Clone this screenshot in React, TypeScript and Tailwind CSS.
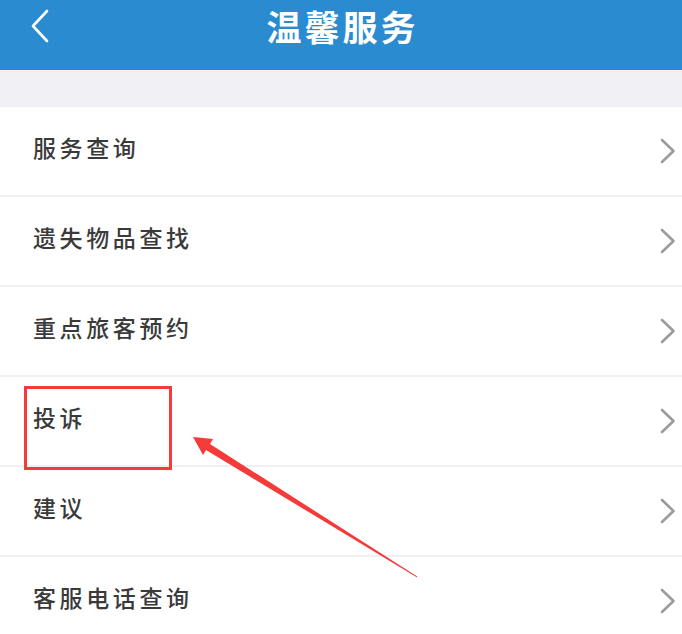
import React from "react";

const items = ["服务查询", "遗失物品查找", "重点旅客预约", "投诉", "建议", "客服电话查询"];

function Chevron() {
  return (
    <svg width="16" height="26" viewBox="0 0 16 26" fill="none" className="shrink-0">
      <polyline points="2,2 13.5,13 2,24" stroke="#9b9b9b" strokeWidth="2.6" strokeLinecap="round" strokeLinejoin="round" />
    </svg>
  );
}

export default function App() {
  return (
    <div
      className="relative w-[682px] h-[634px] overflow-hidden bg-white"
      style={{ fontFamily: '"Noto Sans CJK SC", "Noto Sans", sans-serif' }}
    >
      <header className="h-[70px] bg-[#2a8bd0]">
        <div className="relative h-[51px] flex items-center justify-center">
          <svg width="20" height="34" viewBox="0 0 20 34" fill="none" className="absolute left-[30px] top-[9px]">
            <polyline points="17,2 3,17 17,32" stroke="#ffffff" strokeWidth="2.6" strokeLinecap="round" strokeLinejoin="round" />
          </svg>
          <h1 className="text-white text-[35px] font-bold tracking-[3px] leading-none pl-[3px]">温馨服务</h1>
        </div>
      </header>
      <div className="h-[37px] bg-[#efeff4]" />
      <ul>
        {items.map((t) => (
          <li
            key={t}
            className="h-[90px] border-b-2 border-[#efeff4] flex items-center justify-between pl-[33px] pr-[6px]"
          >
            <span className="text-[23px] font-medium tracking-[3.6px] text-[#3a3a3a] leading-none pb-[7px]">{t}</span>
            <Chevron />
          </li>
        ))}
      </ul>
      <div className="absolute left-[24px] top-[386px] w-[148px] h-[84px] border-[3px] border-[#f53a3a]" />
      <svg className="absolute inset-0 pointer-events-none" width="682" height="634" viewBox="0 0 682 634">
        <polygon
          points="193,437 213,439 210,444 417.3,576.5 416.7,577.3 206,450 203,455"
          fill="#f53a3a"
        />
      </svg>
    </div>
  );
}
